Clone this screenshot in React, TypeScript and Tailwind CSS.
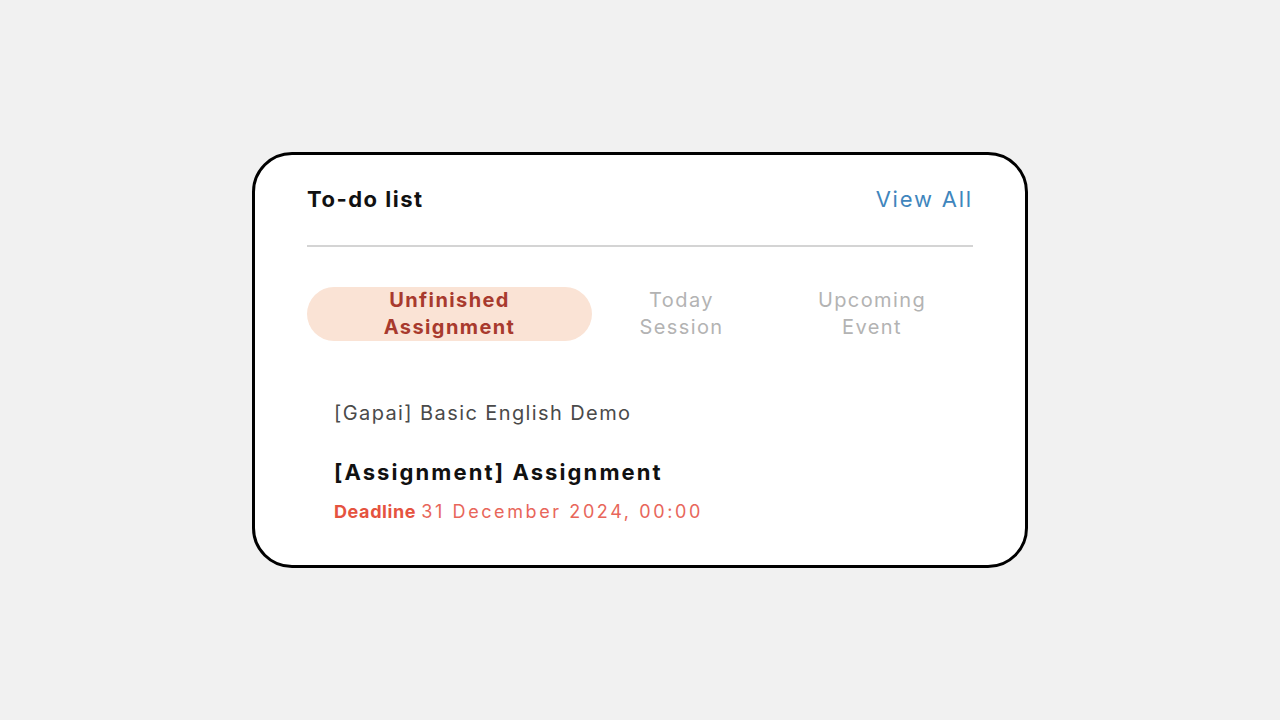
import React, { useState, type FC } from 'react';

const tabs = [
  { label: ['Unfinished', 'Assignment'], width: 'w-[285px]' },
  { label: ['Today', 'Session'], width: 'w-[179px]' },
  { label: ['Upcoming', 'Event'], width: 'w-[202px]' },
];

const TodoCard: FC = () => {
  const [active, setActive] = useState<number>(0);

  return (
    <div className="w-[776px] h-[416px] rounded-[40px] border-[3px] border-black bg-white px-[52px] pt-[27px]">
      <div className="flex items-center justify-between h-[34px]">
        <span className="text-[22px] font-bold text-[#111] tracking-[1.5px]">To-do list</span>
        <span className="text-[22px] text-[#3f86bd] tracking-[1.8px]">View All</span>
      </div>
      <div className="mt-[29px] h-[2px] bg-[#d4d4d4]" />

      <div className="mt-[40px] flex">
        {tabs.map((t, i) => (
          <button
            key={t.label[0]}
            onClick={() => setActive(i)}
            className={
              t.width +
              ' h-[54px] rounded-full flex flex-col items-center justify-center text-[20px] leading-[27px] tracking-[1.4px] ' +
              (active === i ? 'bg-[#fae3d5] text-[#a83a2e] font-bold' : 'text-[#b3b3b3]')
            }
          >
            <span>{t.label[0]}</span>
            <span>{t.label[1]}</span>
          </button>
        ))}
      </div>

      <div className="mt-[58px] pl-[27px]">
        <div className="text-[20px] text-[#4a4a4a] leading-[28px] tracking-[1.4px]">[Gapai] Basic English Demo</div>
        <div className="mt-[30px] text-[22px] font-bold text-[#111] leading-[30px] tracking-[2.1px]">
          [Assignment] Assignment
        </div>
        <div className="mt-[13px] text-[18px] leading-[24px] text-[#e8665a]">
          <span className="font-bold text-[#e5533f] tracking-[0.6px]">Deadline</span>{' '}
          <span className="tracking-[2.6px]">31 December 2024, 00:00</span>
        </div>
      </div>
    </div>
  );
};

export default function App() {
  return (
    <div className="w-[1280px] h-[720px] bg-[#f1f1f1] flex items-center justify-center font-['Inter',sans-serif]">
      <TodoCard />
    </div>
  );
}
